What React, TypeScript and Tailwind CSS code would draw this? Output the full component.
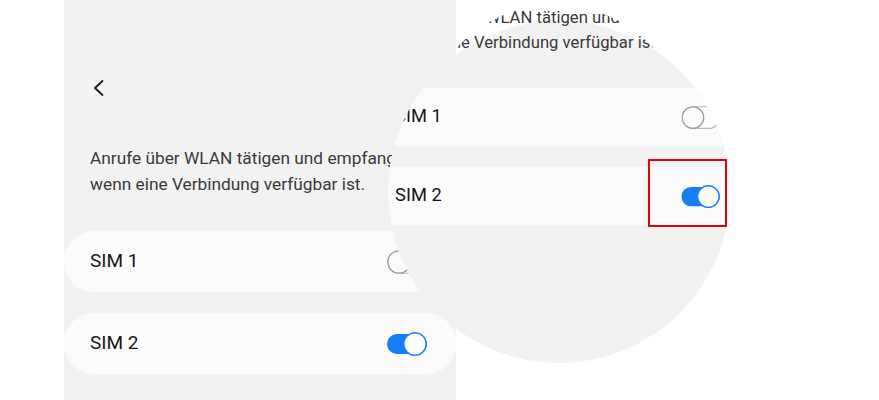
import React from "react";

const font = { fontFamily: "Roboto, 'Noto Sans', sans-serif" };

function ToggleOn() {
  return (
    <svg width="40" height="24" viewBox="0 0 40 24" fill="none">
      <rect x="0" y="2" width="40" height="20" rx="10" fill="#137ff3" />
      <circle cx="28" cy="12" r="11.2" fill="#fdfdfd" stroke="#1f86f5" strokeWidth="1.5" />
    </svg>
  );
}

function ToggleOff() {
  return (
    <svg width="40" height="24" viewBox="0 0 40 24" fill="none">
      <path d="M12 0.75 H29" stroke="#b9b9b9" strokeWidth="1.2" />
      <path d="M12 23.25 H29 A10 10 0 0 0 37.5 18" stroke="#b9b9b9" strokeWidth="1.2" />
      <circle cx="12" cy="12" r="11.2" fill="#fbfbfb" stroke="#9d9d9d" strokeWidth="1.3" />
    </svg>
  );
}

// the settings screen, 392 wide; "mode" lets the magnifier draw text and cards in separate layers
function Screen({ mode = "all" }: { mode?: "all" | "text" | "cards" }) {
  const showText = mode !== "cards";
  const showCards = mode !== "text";
  return (
    <div
      className={`w-[392px] h-[400px] flex flex-col ${mode === "text" ? "" : "bg-[#f2f2f2]"}`}
      style={font}
    >
      <div className={`pt-[80px] pl-[29px] ${showText ? "" : "invisible"}`}>
        <svg width="11" height="16" viewBox="0 0 11 16" fill="none">
          <path d="M9.5 1 L2 8 L9.5 15" stroke="#1c1c1c" strokeWidth="1.8" strokeLinecap="round" strokeLinejoin="round" />
        </svg>
      </div>
      <p
        className={`mt-[49px] pl-[26px] text-[17.3px] leading-[26px] text-[#3a3a3a] whitespace-nowrap ${showText ? "" : "invisible"}`}
      >
        Anrufe über WLAN tätigen und empfangen,
        <br />
        wenn eine Verbindung verfügbar ist.
      </p>
      <div className={`mt-[34px] flex flex-col gap-[21px] ${showCards ? "" : "invisible"}`}>
        <div className="h-[61px] rounded-[30px] bg-[#fbfbfb] flex items-center justify-between pl-[26px] pr-[29px]">
          <span className="text-[19px] text-[#161616]">SIM 1</span>
          <ToggleOff />
        </div>
        <div className="h-[61px] rounded-[30px] bg-[#fbfbfb] flex items-center justify-between pl-[26px] pr-[29px]">
          <span className="text-[19px] text-[#161616]">SIM 2</span>
          <ToggleOn />
        </div>
      </div>
    </div>
  );
}

export default function App() {
  return (
    <div className="relative w-[879px] h-[400px] bg-white overflow-hidden">
      <div className="ml-[64px]">
        <Screen />
      </div>

      {/* magnifier lens */}
      <div className="absolute left-[388px] top-[21px] w-[342px] h-[342px] rounded-full overflow-hidden bg-[#f2f2f2]">
        <div className="absolute left-[-18px] top-[-156px] origin-top-left scale-[0.964]">
          <Screen mode="cards" />
        </div>
      </div>
      <div className="absolute left-[420px] top-[5px] w-[270px] h-[270px] rounded-full overflow-hidden pointer-events-none">
        <div className="absolute left-[-50px] top-[-140px] origin-top-left scale-[0.964]">
          <Screen mode="text" />
        </div>
      </div>

      {/* highlight */}
      <div className="absolute left-[648px] top-[159px] w-[79px] h-[68px] border-2 border-[#e3000f]" />
    </div>
  );
}
